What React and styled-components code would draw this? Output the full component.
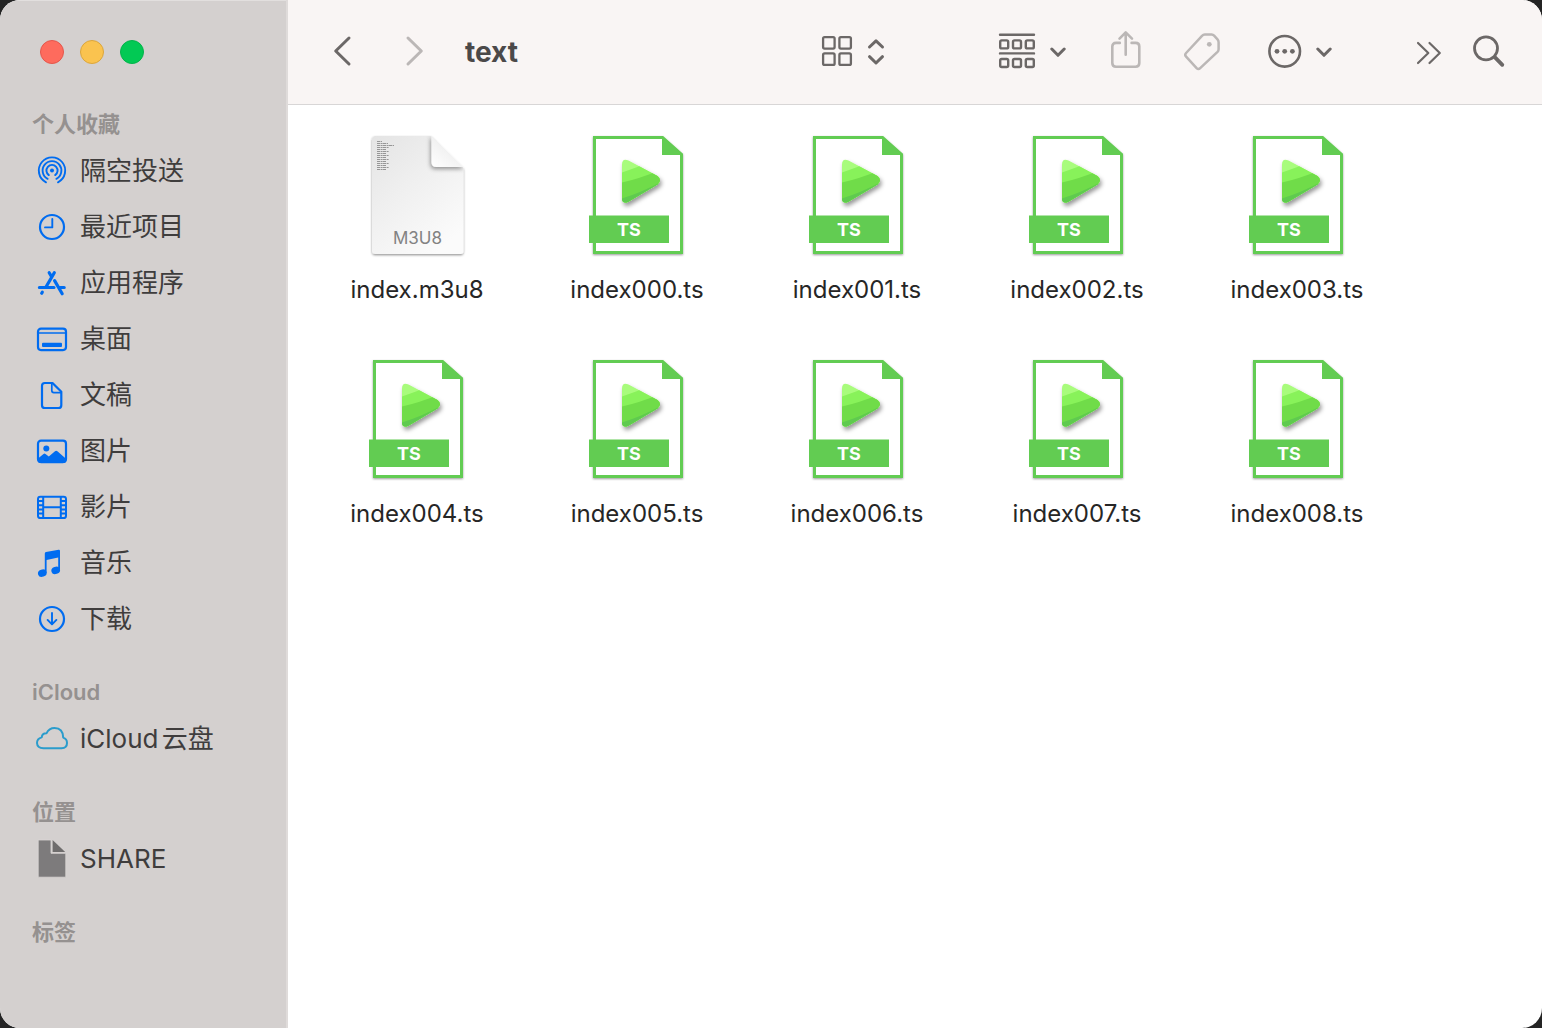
import React from "react";
import styled, { createGlobalStyle } from "styled-components";

const GlobalStyle = createGlobalStyle`
  * { box-sizing: border-box; }
  body {
    margin: 0;
    background: #242424;
    font-family: Inter, "Noto Sans CJK SC", sans-serif;
    color: #262626;
  }
  h1, h2, ul { margin: 0; padding: 0; }
  ul { list-style: none; }
  button { border: 0; padding: 0; background: none; font: inherit; color: inherit; }
  svg { display: block; flex: none; }
`;

const Window = styled.div`
  display: flex;
  min-height: 100vh;
  border-radius: 20px;
  overflow: hidden;
  background: #ffffff;
`;

const Sidebar = styled.aside`
  flex: none;
  width: 288px;
  background: #d4d0cf;
  border-right: 2px solid #dfdbda;
  box-shadow: inset 0 1px 0 #e2dfde;
`;

const WindowControls = styled.div`
  display: flex;
  align-items: center;
  gap: 16px;
  height: 104px;
  padding-left: 40px;
`;

const Light = styled.button`
  width: 24px;
  height: 24px;
  border-radius: 50%;
  background: ${(p) => p.$fill};
  border: 1px solid ${(p) => p.$edge};
`;

const Places = styled.nav`
  padding-top: 1px;
`;

const Section = styled.section`
  & + & { margin-top: 26px; }
`;

const SectionTitle = styled.h2`
  height: 38px;
  padding-left: 32px;
  font-size: 22px;
  line-height: 38px;
  font-weight: 600;
  color: #959190;
`;

const Place = styled.a`
  display: flex;
  align-items: center;
  gap: 12px;
  height: 56px;
  padding-left: 36px;
  font-size: 26px;
  line-height: 36px;
  text-autospace: normal;
  color: #3f3d3d;
  text-decoration: none;
`;

const PlaceIcon = styled.svg`
  width: 32px;
  height: 40px;
  color: ${(p) => p.$color || "#006cf0"};
`;

const Main = styled.main`
  flex: 1;
  min-width: 0;
`;

const Toolbar = styled.header`
  display: flex;
  align-items: center;
  height: 105px;
  padding: 0 36px 0 44px;
  background: #f9f5f4;
  border-bottom: 1px solid #d8d6d6;
`;

const Group = styled.div`
  display: flex;
  align-items: center;
  gap: ${(p) => p.$gap}px;
`;

const Title = styled.h1`
  margin-left: 40px;
  margin-right: auto;
  font-size: 28px;
  line-height: 36px;
  font-weight: 700;
  color: #4b4949;
`;

const Tools = styled(Group)`
  margin-left: ${(p) => p.$before}px;
`;

const ToolButton = styled.button`
  display: flex;
  align-items: center;
  gap: 10px;
  color: ${(p) => (p.disabled ? "#bbb7b6" : "#6c6867")};
`;

const Files = styled.ul`
  display: grid;
  grid-template-columns: repeat(auto-fill, 220px);
  row-gap: 50px;
  && { padding: 27px 0 27px 19px; }
`;

const File = styled.li`
  display: flex;
  flex-direction: column;
  align-items: center;
  gap: 14px;
`;

const FileName = styled.span`
  font-size: 24px;
  line-height: 32px;
`;

const Glyph = ({ w, stroke = 2.6, children }) => (
  <svg width={w} height="44" viewBox={`0 -2 ${w} 44`} fill="none" stroke="currentColor"
    strokeWidth={stroke} strokeLinecap="round" strokeLinejoin="round" aria-hidden="true">
    {children}
  </svg>
);

const Caret = () => (
  <Glyph w={16} stroke={3}><path d="M1.800 17l6.200 6.300 6.200-6.300" /></Glyph>
);

const line = { fill: "none", stroke: "currentColor", strokeWidth: 2.2, strokeLinecap: "round", strokeLinejoin: "round" };

const placeIcons = {
  airdrop: (
    <g {...line} strokeWidth="1.9">
      <path d="M10 31.3a13.2 13.2 0 1 1 12 0" />
      <path d="M11.6 27.8a9.4 9.4 0 1 1 8.8 0" />
      <path d="M12.8 24.1a5.6 5.6 0 1 1 6.4 0" />
      <circle cx="16" cy="19.5" r="2" fill="currentColor" stroke="none" />
    </g>
  ),
  recent: <g {...line}><circle cx="16" cy="20" r="12" /><path d="M16.300 12v8.400H9" strokeWidth="1.900" /></g>,
  apps: (
    <g {...line} strokeWidth="3.200">
      <path d="M18.300 9.700L10 24M13.200 9.700l1.800 3M18.600 17.600l7.600 13.100M3.400 24.500H18M24.400 24.500h3.800M6.300 29.200l-.6 1" />
    </g>
  ),
  desktop: (
    <g {...line}>
      <rect x="2" y="9.700" width="28" height="21.400" rx="3" />
      <path d="M2 14h28" strokeWidth="1.700" />
      <rect x="6" y="23.800" width="20" height="4.200" rx="1" fill="currentColor" stroke="none" />
    </g>
  ),
  documents: (
    <g {...line}>
      <path d="M16.500 8H8.800Q6 8 6 10.800v19.400Q6 33 8.800 33h13.700q2.800 0 2.800-2.800V16.800z" />
      <path d="M15.800 8v7.600q0 2 2 2h7.200" strokeWidth="1.700" />
    </g>
  ),
  pictures: (
    <g>
      <rect x="2" y="9.700" width="28" height="21.400" rx="3" {...line} />
      <circle cx="10.300" cy="17.600" r="3" fill="currentColor" />
      <path d="M2 27.500l5.500-4.600q1-.8 2 0l3.300 2.700 6.200-5.400q1.200-1 2.400 0L30 27.800V30q0 2-2 2H4q-2 0-2-2z" fill="currentColor" />
    </g>
  ),
  movies: (
    <g {...line} strokeWidth="2">
      <rect x="2" y="9.700" width="28" height="21.400" rx="2.400" />
      <path d="M7.200 9.600V31M24.800 9.600V31M7.200 20.300h17.600M2 14h5M2 18.200h5M2 22.400h5M2 26.600h5M25 14h5M25 18.200h5M25 22.400h5M25 26.600h5" strokeLinecap="butt" />
    </g>
  ),
  music: (
    <g fill="currentColor">
      <path d="M8.800 10.400q0-1.200 1.200-1.400l12.600-2.200q1.400-.2 1.400 1.100V27h-1.800V14.600L10.600 17v13H8.800z" />
      <ellipse cx="6.300" cy="30.200" rx="4.400" ry="3.600" transform="rotate(-20 6.300 30.200)" />
      <ellipse cx="19.700" cy="27.400" rx="4.400" ry="3.600" transform="rotate(-20 19.700 27.400)" />
    </g>
  ),
  downloads: <g {...line}><circle cx="16" cy="20" r="12" /><path d="M16 14v11.200M11.600 20.900l4.400 4.500 4.400-4.500" strokeWidth="1.900" /></g>,
  cloud: (
    <path {...line} strokeWidth="2" d="M7.500 29.300h18q5.500-.3 5.500-5.400 0-4-3.800-5.300Q27 9 18.600 9q-5.600 0-8 5.200-4.400-.2-4.900 4.200Q1 19.600 1 24q.2 5 6.500 5.300z" />
  ),
  share: (
    <g>
      <path d="M2.200 1h12.800v13.300H29.800V38.200H2.200z" fill="#7d7b7c" stroke="#dad7d6" strokeWidth=".8" />
      <path d="M16.600 1L29.200 13H16.600z" fill="#6f6d6d" />
    </g>
  ),
};

const sections = [
  {
    title: "个人收藏",
    places: [
      ["隔空投送", "airdrop"], ["最近项目", "recent"], ["应用程序", "apps"],
      ["桌面", "desktop"], ["文稿", "documents"], ["图片", "pictures"],
      ["影片", "movies"], ["音乐", "music"], ["下载", "downloads"],
    ],
  },
  { title: "iCloud", places: [["iCloud云盘", "cloud", "#2b9ccc"]] },
  { title: "位置", places: [["SHARE", "share"]] },
  { title: "标签", places: [] },
];

const PlaylistIcon = () => (
  <svg width="128" height="128" viewBox="0 0 128 128" aria-hidden="true">
    <defs>
      <linearGradient id="paper" x1="0" y1="0" x2=".7" y2="1">
        <stop offset="0" stopColor="#e4e4e4" />
        <stop offset=".45" stopColor="#efefef" />
        <stop offset="1" stopColor="#fbfbfb" />
      </linearGradient>
      <linearGradient id="curl" x1="0" y1="1" x2=".6" y2=".3">
        <stop offset="0" stopColor="#ffffff" />
        <stop offset="1" stopColor="#ededed" />
      </linearGradient>
      <filter id="paperShadow" x="-10%" y="-10%" width="120%" height="120%">
        <feDropShadow dx="0" dy="1.2" stdDeviation="1.2" floodOpacity=".42" />
      </filter>
      <filter id="curlShadow" x="-40%" y="-40%" width="180%" height="180%">
        <feDropShadow dx="-1" dy="2" stdDeviation="2.2" floodOpacity=".4" />
      </filter>
      <clipPath id="paperClip"><path d="M22.500 4h55.500l32.500 32v83q0 3-3 3H22.500q-3.500 0-3.500-3V7.500Q19 4 22.500 4z" /></clipPath>
    </defs>
    <path d="M22.500 4h55.500l32.500 32v83q0 3-3 3H22.500q-3.500 0-3.500-3V7.500Q19 4 22.500 4z" fill="url(#paper)" filter="url(#paperShadow)" />
    <g clipPath="url(#paperClip)">
      <path d="M78.500 3v27q0 5 5 5H112z" fill="url(#curl)" filter="url(#curlShadow)" />
    </g>
    <path
      d="M24 9.500h5M24 11.500h11M24 13.500h17M24 15.500h12M24 17.500h9M24 19.500h12M24 21.500h9M24 23.500h12M24 25.500h9M24 27.500h12M24 29.500h9M24 31.500h12M24 33.500h9M24 35.500h12M24 37.500h9"
      stroke="#969696" strokeDasharray="3 .6 2 .4"
    />
    <text x="64.500" y="112" textAnchor="middle" fontSize="17" fontFamily="Inter, sans-serif" fill="#828282">M3U8</text>
  </svg>
);

const VideoIcon = () => (
  <svg width="128" height="128" viewBox="0 0 128 128" aria-hidden="true">
    <defs>
      <clipPath id="playClip">
        <path d="M49 32.500q0-6.500 6.500-4L84.500 44q5 4 0 8.500L55.500 69.700Q49 72.500 49 66z" />
      </clipPath>
      <filter id="soft" x="-20%" y="-20%" width="150%" height="150%">
        <feDropShadow dx="1.500" dy="3" stdDeviation="2" floodOpacity=".4" />
      </filter>
      <filter id="sheetShadow" x="-10%" y="-10%" width="120%" height="120%">
        <feDropShadow dx="0" dy="1" stdDeviation="1" floodOpacity=".4" />
      </filter>
    </defs>
    <path d="M21.500 5.500h68l19 17v98h-87z" fill="#fff" stroke="#62cc52" strokeWidth="3" filter="url(#sheetShadow)" />
    <path d="M89 4l21 18.500v.5H89z" fill="#62cc52" />
    <g filter="url(#soft)">
      <g clipPath="url(#playClip)">
        <rect x="48" y="26" width="42" height="46" fill="#a8fc7c" />
        <path d="M48 40.800L63 35.500 90 24v48H48z" fill="#88f25a" />
        <path d="M48 50.700Q66 47 90 37v35H48z" fill="#70dc48" />
        <path d="M48 66.800Q68 61 90 49v24H48z" fill="#5fca50" />
      </g>
    </g>
    <rect x="16" y="83.500" width="80" height="27.500" fill="#62cc52" />
    <text x="56" y="104" textAnchor="middle" fontSize="18" fontWeight="700" fontFamily="Inter, sans-serif" fill="#fff">TS</text>
  </svg>
);

const files = ["index.m3u8", ...Array.from({ length: 9 }, (_, i) => `index00${i}.ts`)];

export default function App() {
  return (
    <>
      <GlobalStyle />
      <Window>
        <Sidebar>
          <WindowControls>
            <Light $fill="#fe6b5d" $edge="#e4574c" aria-label="关闭" />
            <Light $fill="#fac34f" $edge="#dba63d" aria-label="最小化" />
            <Light $fill="#02c954" $edge="#04b34b" aria-label="缩放" />
          </WindowControls>
          <Places>
            {sections.map((s) => (
              <Section key={s.title}>
                <SectionTitle>{s.title}</SectionTitle>
                <ul>
                  {s.places.map(([name, icon, color]) => (
                    <li key={name}>
                      <Place href="#">
                        <PlaceIcon viewBox="0 0 32 40" $color={color} aria-hidden="true">{placeIcons[icon]}</PlaceIcon>
                        {name}
                      </Place>
                    </li>
                  ))}
                </ul>
              </Section>
            ))}
          </Places>
        </Sidebar>
        <Main>
          <Toolbar>
            <Group $gap={53}>
              <ToolButton aria-label="后退"><Glyph w={20} stroke={3}><path d="M17 6L3.700 19 17 32" /></Glyph></ToolButton>
              <ToolButton aria-label="前进" disabled><Glyph w={20} stroke={3}><path d="M3 6l13.300 13L3 32" /></Glyph></ToolButton>
            </Group>
            <Title>text</Title>
            <ToolButton aria-label="显示方式">
              <Glyph w={36} stroke={2.3}>
                {[5.1, 21.4].map((y) => [2.1, 18.4].map((x) => (
                  <rect key={`${x}-${y}`} x={x} y={y} width="11.500" height="11.500" rx="1.500" />
                )))}
              </Glyph>
              <Glyph w={18} stroke={3}><path d="M2.500 15L9 8.800l6.500 6.200M2.500 24.700L9 31l6.500-6.300" /></Glyph>
            </ToolButton>
            <Tools $before={113} $gap={42}>
              <ToolButton aria-label="分组">
                <Glyph w={42} stroke={2.4}>
                  <path d="M2 2.800h34M2 21.400h34" />
                  {[8.4, 27].map((y) => [2.2, 15, 27.8].map((x) => (
                    <rect key={`${x}-${y}`} x={x} y={y} width="8" height="8" rx="1.500" />
                  )))}
                </Glyph>
                <Caret />
              </ToolButton>
              <ToolButton aria-label="共享" disabled>
                <Glyph w={34} stroke={2.6}>
                  <path d="M11.800 10.900H8q-3.700 0-3.700 3.700V31q0 3.700 3.700 3.700h19.600q3.700 0 3.700-3.700V14.600q0-3.700-3.700-3.700h-4" />
                  <path d="M17.700 22.700V.8M11.500 6.600L17.700.4 24 6.600" />
                </Glyph>
              </ToolButton>
              <ToolButton aria-label="标签" disabled>
                <Glyph w={36} stroke={2.5}>
                  <path d="M18 3.800q1.200-1.200 2.800-1.200h6.800q1.500 0 2.500 1.100l3.400 3.700q1.100 1.200 1.100 2.800v7q0 1.500-1.100 2.600L16.200 36.200q-1.800 1.800-3.600 0L2.100 24.600q-1.700-1.800 0-3.600z" />
                  <circle cx="25.300" cy="12.300" r="2.400" fill="currentColor" stroke="none" />
                </Glyph>
              </ToolButton>
              <ToolButton aria-label="更多操作">
                <Glyph w={44}>
                  <circle cx="22.700" cy="19.300" r="15.300" />
                  <g fill="currentColor" stroke="none">
                    <circle cx="15" cy="19.300" r="2.400" />
                    <circle cx="22.700" cy="19.300" r="2.400" />
                    <circle cx="30.400" cy="19.300" r="2.400" />
                  </g>
                </Glyph>
                <Caret />
              </ToolButton>
            </Tools>
            <Tools $before={84} $gap={30}>
              <ToolButton aria-label="显示更多"><Glyph w={26} stroke={2.2}><path d="M2 11l10.300 10L2 31M13.500 11L23.800 21 13.500 31" /></Glyph></ToolButton>
              <ToolButton aria-label="搜索">
                <Glyph w={34} stroke={2.8}>
                  <circle cx="14" cy="16.300" r="11.500" />
                  <path d="M23 25.300l7.300 7.500" strokeWidth="3.800" />
                </Glyph>
              </ToolButton>
            </Tools>
          </Toolbar>
          <Files>
            {files.map((name) => (
              <File key={name}>
                {name.endsWith(".ts") ? <VideoIcon /> : <PlaylistIcon />}
                <FileName>{name}</FileName>
              </File>
            ))}
          </Files>
        </Main>
      </Window>
    </>
  );
}
